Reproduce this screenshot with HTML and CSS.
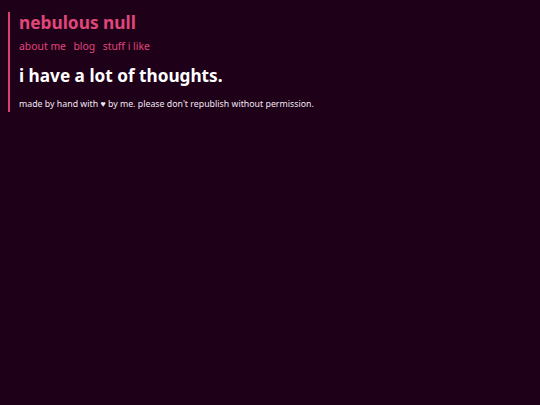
FILE: index.html
```
<!DOCTYPE html>
<html>
<head>
<meta charset="utf-8">
<link rel="stylesheet" href="styles.css">
</head>
<body>
<div class="page">
  <h1 class="site-title">nebulous null</h1>
  <nav class="nav">
    <a href="#">about me</a>
    <a href="#">blog</a>
    <a href="#">stuff i like</a>
  </nav>
  <h2 class="headline">i have a lot of thoughts.</h2>
  <p class="footer">made by hand with ♥ by me. please don't republish without permission.</p>
</div>
</body>
</html>
```
FILE: styles.css
```
html, body {
  background: #1f0019;
}
body {
  margin: 0;
  padding: 12px 8px;
  font-family: "Noto Sans", "Open Sans", sans-serif;
  color: #ffffff;
}
.page {
  border-left: 2px solid #d9406f;
  padding-left: 9px;
  padding-bottom: 1px;
}
.site-title {
  margin: 0;
  font-size: 17.3px;
  line-height: 22px;
  font-weight: 700;
  color: #e0477a;
}
.nav {
  display: flex;
  gap: 7.5px;
  margin-top: 4px;
  font-size: 10.4px;
  line-height: 16px;
}
.nav a {
  color: #e0477a;
  text-decoration: none;
}
.headline {
  margin: 10px 0 0;
  font-size: 17.2px;
  line-height: 24px;
  font-weight: 700;
  color: #ffffff;
}
.footer {
  margin: 9px 0 0;
  font-size: 8.8px;
  line-height: 14px;
  color: #f0e8ee;
}
```
